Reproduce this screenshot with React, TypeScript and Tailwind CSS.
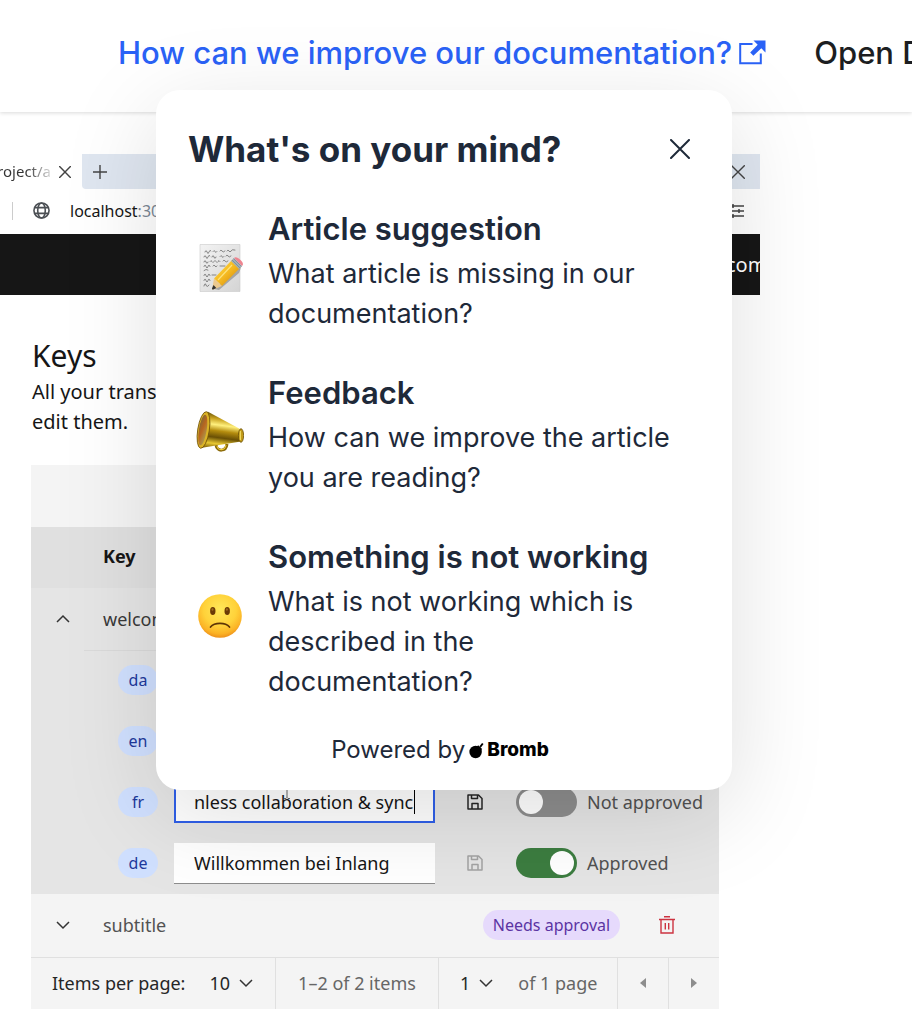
import type { ReactNode } from "react";

const inter = "font-['Inter',sans-serif]";
const noto = "font-['Noto_Sans',sans-serif]";

function ExternalIcon() {
  return (
    <svg viewBox="0 0 28 26" className="h-[26px] w-7 shrink-0" fill="none" aria-hidden="true">
      <path d="M14.500 4H2.200v19.200h20.600V13.500" stroke="#2a62f6" strokeWidth="2" />
      <path d="M15.500 .5H27.500v12l-4.200-4.200-7.900 7.400-3.200-3.200 7.500-7.800z" fill="#2a62f6" />
    </svg>
  );
}

function CrossIcon({ className }: { className: string }) {
  return (
    <svg viewBox="0 0 20 20" className={className} fill="none" stroke="currentColor" aria-hidden="true">
      <path d="M1 1l18 18M19 1L1 19" strokeLinecap="round" />
    </svg>
  );
}

function MemoIcon() {
  return (
    <svg viewBox="0 0 48 48" className="size-12" fill="none" aria-hidden="true">
      <defs>
        <linearGradient id="paper" x1="0" y1="0" x2="1" y2="1">
          <stop offset="0" stopColor="#f3f3f3" />
          <stop offset="1" stopColor="#d4d4d4" />
        </linearGradient>
        <linearGradient id="pencil" x1="0" y1="0" x2="1" y2="1">
          <stop offset="0" stopColor="#ffe14d" />
          <stop offset=".5" stopColor="#f5b921" />
          <stop offset="1" stopColor="#c57d0c" />
        </linearGradient>
      </defs>
      <path d="M4 .5h40v47H4z" fill="url(#paper)" stroke="#c9c9c9" strokeWidth=".6" />
      <g stroke="#5a5a5a" strokeWidth=".7" strokeLinecap="round">
        <path d="M9 8q1-3 2 0t2 0 2-1M17 7.500q1-2 2 0t2 0M24 7q1-2 2 0t3 0M31 7q1-2 2 0t2 0 4-1" />
        <path d="M8 13q1-3 2 0t2 0 2-1M16 13q1-3 2 0t2 0M24 12.500q1-2 2 0t2 0M30 12q1-2 2 0t3 0" />
        <path d="M8 18q1-3 2 0t2 0M14 17.500q1-2 2 0t2 0 2 0 2 0 2 0M27 17q1-2 2 0t3 0" />
        <path d="M8 22.500q1-3 2 0t2 0 2 0M17 22q1-2 2 0t2 0M24 22h5M8 26.500q2-2 4-.5" />
        <path d="M8 31.500q1-3 2 0t2 0 2 0M16 31h4M8 36.500q1-3 2 0t2 0 2 0M8 42q1-4 2-1t3 0" />
      </g>
      <path d="M18 45l28-24-3 8-20 17z" fill="#000" opacity=".25" />
      <path d="M36.500 15.500l8 8L26 42l-8-7.500z" fill="url(#pencil)" />
      <path d="M35 17l3-3 8 8-3 3z" fill="#9fb0bb" />
      <path d="M36 16l8 8M37.500 14.500l8 8" stroke="#6f808b" strokeWidth=".6" />
      <path d="M38 14c1.500-1.200 3.500-.8 6.500 2s3 5 1.500 6z" fill="#ee8590" />
      <path d="M18 34.500l8 7.500-8.500 3.500c-1 .3-1.500-.3-1.200-1.200z" fill="#ecc98f" />
      <path d="M17.500 41l2.800 3-3 1.500c-1 .3-1.500-.3-1.200-1.200z" fill="#333" />
      <path d="M36 21L22 36" stroke="#fff2a0" strokeWidth="1.200" opacity=".7" />
    </svg>
  );
}

function MegaphoneIcon() {
  return (
    <svg viewBox="0 0 48 48" className="size-12" fill="none" aria-hidden="true">
      <defs>
        <linearGradient id="horn" x1=".3" y1="0" x2=".15" y2="1">
          <stop offset="0" stopColor="#5a4706" />
          <stop offset=".18" stopColor="#c9a320" />
          <stop offset=".34" stopColor="#fff07e" />
          <stop offset=".5" stopColor="#b48c0e" />
          <stop offset=".68" stopColor="#6a5005" />
          <stop offset=".85" stopColor="#e8c832" />
          <stop offset="1" stopColor="#7a5b07" />
        </linearGradient>
        <linearGradient id="bell" x1="0" y1="0" x2="1" y2="1">
          <stop offset="0" stopColor="#6f6a3a" />
          <stop offset=".45" stopColor="#b8651f" />
          <stop offset="1" stopColor="#aaa85a" />
        </linearGradient>
      </defs>
      <path d="M20 37c1 7 10 7 11-1" stroke="#8a6908" strokeWidth="3" />
      <path d="M21 38c1 5 8 5 9-1" stroke="#f1cf3c" strokeWidth="1.100" />
      <path d="M11.500 3.500L45 21.500v12L4.500 40z" fill="url(#horn)" />
      <ellipse cx="45" cy="27.500" rx="2.600" ry="6.800" fill="#c29b18" stroke="#6c5105" strokeWidth=".8" />
      <path d="M44.300 23v9" stroke="#fff07e" strokeWidth=".9" />
      <ellipse cx="7.500" cy="22" rx="5.800" ry="18.500" transform="rotate(9 7.500 22)" fill="#dbb326" stroke="#704f05" strokeWidth=".8" />
      <ellipse cx="6.800" cy="22" rx="3.900" ry="15.500" transform="rotate(9 6.800 22)" fill="url(#bell)" />
    </svg>
  );
}

function FrownIcon() {
  return (
    <svg viewBox="0 0 48 48" className="size-12" fill="none" aria-hidden="true">
      <defs>
        <radialGradient id="face" cx=".5" cy=".35" r=".68">
          <stop offset="0" stopColor="#ffe85a" />
          <stop offset=".55" stopColor="#ffd23a" />
          <stop offset=".82" stopColor="#fbb225" />
          <stop offset="1" stopColor="#e98617" />
        </radialGradient>
      </defs>
      <circle cx="24" cy="24" r="21.800" fill="url(#face)" />
      <ellipse cx="16.800" cy="19" rx="2.700" ry="4.100" fill="#6b3a06" />
      <ellipse cx="31.200" cy="19" rx="2.700" ry="4.100" fill="#6b3a06" />
      <ellipse cx="16.500" cy="17.500" rx="1" ry="1.300" fill="#a06b20" />
      <ellipse cx="30.900" cy="17.500" rx="1" ry="1.300" fill="#a06b20" />
      <path d="M14.500 35c4-4.800 15-4.800 19 0" stroke="#5e3506" strokeWidth="1.700" strokeLinecap="round" />
    </svg>
  );
}

function Chevron({ up = false }: { up?: boolean }) {
  return (
    <svg viewBox="0 0 16 10" className="h-[10px] w-4 shrink-0" fill="none" stroke="#333" strokeWidth="1.500" aria-hidden="true">
      <path d={up ? "M2 8L8 2l6 6" : "M2 2l6 6 6-6"} />
    </svg>
  );
}

function SaveIcon({ className }: { className: string }) {
  return (
    <svg viewBox="0 0 16 16" className={className} fill="none" stroke="currentColor" strokeWidth="1.500" aria-hidden="true">
      <path d="M1 1h10.500L15 4.500V15H1zM4.500 1v3.500h6V1M5 15V9.500h6V15" strokeLinejoin="round" />
    </svg>
  );
}

function TrashIcon() {
  return (
    <svg viewBox="0 0 16 18" className="h-[18px] w-4" fill="none" stroke="#cc3340" strokeWidth="1.400" aria-hidden="true">
      <path d="M0 3.500h16M2 3.500V17h12V3.500M5 .8h6M6.300 7v6.500M9.700 7v6.500" />
    </svg>
  );
}

function BombIcon() {
  return (
    <svg viewBox="0 0 16 18" className="h-[18px] w-4 shrink-0" aria-hidden="true">
      <circle cx="6.600" cy="11" r="6.200" fill="#000" />
      <path d="M8.500 5l4 3.600M11.200 5.800l2.600-3.300" stroke="#000" strokeWidth="1.900" fill="none" />
    </svg>
  );
}

function Suggestion({ icon, title, text }: { icon: ReactNode; title: string; text: string }) {
  return (
    <button type="button" className="flex w-full items-center gap-6 pr-5 pl-2 text-left">
      <span className="shrink-0 pb-2">{icon}</span>
      <span className="flex flex-col gap-[6px]">
        <span className="text-[31px] leading-[38px] font-semibold">{title}</span>
        <span className="text-[27px] leading-10">{text}</span>
      </span>
    </button>
  );
}

function FeedbackPopover() {
  return (
    <section
      aria-label="Feedback"
      className="absolute top-[90px] left-[156px] z-10 w-[576px] rounded-3xl bg-white px-8 pt-10 pb-5 text-gray-800 shadow-[0_24px_96px_rgba(0,0,0,0.13)]"
    >
      <header className="flex items-center justify-between pr-[10px]">
        <h2 className="text-[35px] leading-[38px] font-bold">What's on your mind?</h2>
        <button type="button" aria-label="Close">
          <CrossIcon className="size-5 stroke-2" />
        </button>
      </header>
      <div className="mt-[42px] flex flex-col gap-10">
        <Suggestion icon={<MemoIcon />} title="Article suggestion" text="What article is missing in our documentation?" />
        <Suggestion icon={<MegaphoneIcon />} title="Feedback" text="How can we improve the article you are reading?" />
        <Suggestion
          icon={<FrownIcon />}
          title="Something is not working"
          text="What is not working which is described in the documentation?"
        />
      </div>
      <footer className="mt-7 flex items-center justify-center gap-1 pr-2">
        <span className="text-2xl leading-10">Powered by</span>
        <a href="#bromb" className="flex items-center gap-[2px] text-[19px] font-extrabold text-black">
          <BombIcon />
          Bromb
        </a>
      </footer>
    </section>
  );
}

function LocaleRow({ code, children }: { code: string; children?: ReactNode }) {
  return (
    <tr className="h-[61px] bg-[#e5e5e5]">
      <td />
      <td colSpan={3} className="pb-px pl-[34px]">
        <div className="flex items-center">
          <span className="flex h-[30px] w-10 shrink-0 items-center justify-center rounded-full bg-[#d0e0ff] text-base text-[#1e3a9c]">
            {code}
          </span>
          {children}
        </div>
      </td>
    </tr>
  );
}

function Approval({ id, label, on = false }: { id: string; label: string; on?: boolean }) {
  return (
    <label htmlFor={id} className="ml-[33px] flex items-center gap-[10px] text-lg text-[#525252]">
      <input id={id} type="checkbox" role="switch" defaultChecked={on} className="peer sr-only" />
      <span className="flex h-[30px] w-[61px] shrink-0 items-center rounded-full bg-[#8d8d8d] px-[3px] peer-checked:justify-end peer-checked:bg-[#3c7d40]">
        <span className="size-6 rounded-full bg-white" />
      </span>
      <span className="whitespace-nowrap">{label}</span>
    </label>
  );
}

function KeysTable() {
  return (
    <div className="mr-[41px] ml-[31px] bg-[#f4f4f4]">
      <div className="h-[62px]" />
      <table className="w-full table-fixed border-collapse text-lg text-[#525252]">
        <colgroup>
          <col className="w-[53px]" />
          <col />
          <col className="w-[164px]" />
          <col className="w-[72px]" />
        </colgroup>
        <thead>
          <tr className="h-[61px] bg-[#e0e0e0] text-left text-[#161616]">
            <td />
            <th scope="col" className="pb-1 pl-[19px] font-bold">Key</th>
            <td />
            <td />
          </tr>
        </thead>
        <tbody>
          <tr className="h-[62px] bg-[#e5e5e5] text-[#393939]">
            <td className="pl-6">
              <button type="button" aria-label="Collapse" className="flex"><Chevron up /></button>
            </td>
            <td colSpan={3} className="border-b border-[#dadada] pl-[19px]">welcome</td>
          </tr>
          <LocaleRow code="da" />
          <LocaleRow code="en" />
          <LocaleRow code="fr">
            <div className="relative ml-4">
              <input
                aria-label="French translation"
                defaultValue="nless collaboration & sync"
                className="block h-[41px] w-[261px] border-2 border-[#2f5fe8] bg-white px-[18px] text-lg text-[#161616] outline-none"
              />
              <span className="absolute top-2 right-5 h-6 w-px bg-black" />
              <svg viewBox="0 0 8 18" className="absolute top-0 left-[109px] h-[18px] w-2" fill="none" stroke="#666" aria-hidden="true">
                <path d="M1 .5h2l1 1 1-1h2M4 1.500v14M1 16.500h2l1-1 1 1h2" />
              </svg>
            </div>
            <button type="button" aria-label="Save French" className="ml-8 text-[#262626]"><SaveIcon className="size-4" /></button>
            <Approval id="fr-approved" label="Not approved" />
          </LocaleRow>
          <LocaleRow code="de">
            <input
              aria-label="German translation"
              defaultValue="Willkommen bei Inlang"
              className="ml-4 block h-[41px] w-[261px] border-b border-[#8d8d8d] bg-white px-5 text-lg text-[#161616] outline-none"
            />
            <button type="button" aria-label="Save German" className="ml-8 text-[#a3a3a3]"><SaveIcon className="size-4" /></button>
            <Approval id="de-approved" label="Approved" on />
          </LocaleRow>
          <tr className="h-[63px] border-b border-[#e0e0e0]">
            <td className="pl-6">
              <button type="button" aria-label="Expand" className="flex"><Chevron /></button>
            </td>
            <td className="pl-[19px]">subtitle</td>
            <td>
              <span className="flex h-[30px] w-[137px] items-center justify-center rounded-full bg-[#e6dafc] text-base text-[#5b34a3]">
                Needs approval
              </span>
            </td>
            <td>
              <button type="button" aria-label="Delete" className="ml-3 flex"><TrashIcon /></button>
            </td>
          </tr>
        </tbody>
      </table>
      <nav aria-label="Pagination" className="flex h-[51px] items-stretch text-lg whitespace-nowrap text-[#666]">
        <div className="flex w-[245px] items-center border-r border-[#e0e0e0] pl-[21px] text-[#262626]">
          Items per page:
          <button type="button" className="ml-6 flex items-center gap-2">10 <Chevron /></button>
        </div>
        <div className="flex w-[163px] items-center justify-center border-r border-[#e0e0e0]">1–2 of 2 items</div>
        <div className="flex flex-1 items-center border-r border-[#e0e0e0] pl-[21px]">
          <button type="button" className="flex items-center gap-2 text-[#262626]">1 <Chevron /></button>
          <span className="ml-6">of 1 page</span>
        </div>
        <button type="button" aria-label="Previous page" className="flex w-[51px] items-center justify-center border-r border-[#e0e0e0]">
          <svg viewBox="0 0 8 12" className="h-3 w-2" fill="#8d8d8d"><path d="M7 1v10L1 6z" /></svg>
        </button>
        <button type="button" aria-label="Next page" className="flex w-[50px] items-center justify-center">
          <svg viewBox="0 0 8 12" className="h-3 w-2" fill="#8d8d8d"><path d="M1 1v10l6-5z" /></svg>
        </button>
      </nav>
    </div>
  );
}

function BrowserPreview() {
  return (
    <div className={`max-w-[760px] overflow-hidden text-lg text-[#161616] ${noto}`}>
      <div className="flex h-[35px] items-stretch">
        <div className="flex w-[82px] shrink-0 items-center justify-end gap-2 pr-[11px]">
          <span className="bg-linear-to-r from-[#333] from-60% to-[#ddd] bg-clip-text text-[15px] text-transparent">project/a</span>
          <CrossIcon className="size-3 shrink-0 stroke-[2.4] text-[#444]" />
        </div>
        <div className="flex flex-1 items-center justify-between rounded-bl bg-[#dfe6f0] px-[11px]">
          <svg viewBox="0 0 14 14" className="size-[14px]" stroke="#444" strokeWidth="1.400" aria-hidden="true"><path d="M7 0v14M0 7h14" /></svg>
          <CrossIcon className="mr-1 size-[14px] stroke-2 text-[#444]" />
        </div>
      </div>
      <div className="flex h-[45px] items-center pb-[2px] pl-3">
        <span className="h-[18px] w-px bg-[#ccc]" />
        <svg viewBox="0 0 18 18" className="ml-5 size-[17px]" fill="none" stroke="#4c5055" strokeWidth="1.700" aria-hidden="true">
          <circle cx="9" cy="9" r="8" />
          <ellipse cx="9" cy="9" rx="4" ry="8" />
          <path d="M2 6h14M2 12h14" />
        </svg>
        <span className="ml-5 text-base">localhost<span className="text-[#7b8794]">:3000</span></span>
        <svg viewBox="0 0 16 14" className="mr-4 ml-auto h-[14px] w-4" stroke="#444" strokeWidth="1.500" aria-hidden="true">
          <path d="M0 2h16M0 7h16M0 12h16M5 0v4M11 5v4M5 10v4" />
        </svg>
      </div>
      <div className="flex h-[61px] items-center justify-end bg-[#161616] text-white">
        <span className="w-[34px] text-xl whitespace-nowrap">com</span>
      </div>
      <div className="px-8 pt-10 pb-7">
        <h1 className="text-[30px] leading-[42px]">Keys</h1>
        <p className="text-xl leading-[30px]">
          All your translations
          <br />
          edit them.
        </p>
      </div>
      <KeysTable />
    </div>
  );
}

export default function App() {
  return (
    <div className={`relative min-h-screen overflow-hidden bg-white ${inter}`}>
      <header className="flex h-28 items-center gap-12 pb-[6px] pl-[118px] text-[31px] whitespace-nowrap shadow-[0_1px_4px_rgba(0,0,0,0.15)]">
        <a href="#feedback" className="flex items-center gap-[6px] font-[450] text-[#2a62f6]">
          How can we improve our documentation?
          <ExternalIcon />
        </a>
        <a href="#demo" className="font-medium text-[#1c1e21]">Open Demo</a>
      </header>
      <main className="pt-[42px]">
        <BrowserPreview />
      </main>
      <FeedbackPopover />
    </div>
  );
}
